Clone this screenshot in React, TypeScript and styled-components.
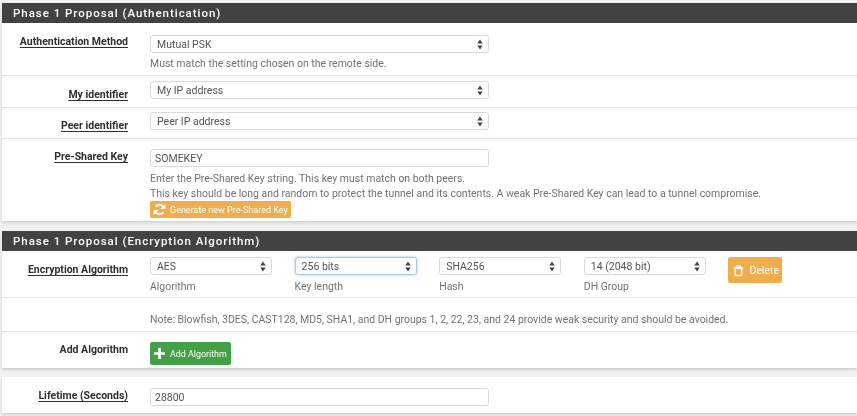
import React from "react";
import styled, { createGlobalStyle } from "styled-components";

const GlobalStyle = createGlobalStyle`
  html, body {
    margin: 0;
    padding: 0;
    background: #f2f2f2;
    overflow: hidden;
  }
  body {
    font-family: Roboto, "Liberation Sans", sans-serif;
    font-size: 10.5px;
    color: #555;
  }
`;

const Page = styled.div`
  width: 857px;
  height: 416px;
  padding: 3px 0 0 2px;
  box-sizing: border-box;
  filter: blur(0.35px);
`;

const Panel = styled.section<{ $gap: number }>`
  background: #fff;
  margin-bottom: ${(p) => p.$gap}px;
  box-shadow: 0 2px 3px rgba(0, 0, 0, 0.14);
`;

const PanelTitle = styled.h2`
  margin: 0;
  height: 20px;
  padding-left: 11px;
  background: #424242;
  color: #fff;
  font-size: 11.5px;
  font-weight: 500;
  letter-spacing: 0.97px;
  line-height: 20px;
`;

const Row = styled.div<{ $height: number; $last?: boolean }>`
  display: grid;
  grid-template-columns: 126px 1fr;
  column-gap: 22px;
  height: ${(p) => p.$height}px;
  box-sizing: border-box;
  border-bottom: ${(p) => (p.$last ? "none" : "1px solid #e6e6e6")};
`;

const Label = styled.div<{ $top: number; $plain?: boolean }>`
  justify-self: end;
  align-self: start;
  margin-top: ${(p) => p.$top}px;
  height: max-content;
  color: #2f2f2f;
  font-size: 10.5px;
  font-weight: 700;
  line-height: 12px;
  text-decoration: ${(p) => (p.$plain ? "none" : "underline")};
  text-underline-offset: 2px;
`;

const Field = styled.div<{ $top: number }>`
  padding-top: ${(p) => p.$top}px;
  min-width: 0;
`;

const Box = styled.div<{ $width: number; $focus?: boolean; $input?: boolean }>`
  display: flex;
  align-items: center;
  justify-content: space-between;
  box-sizing: border-box;
  width: ${(p) => p.$width}px;
  height: 18px;
  padding: 0 5px 0 ${(p) => (p.$input ? 4 : 6)}px;
  background: #fff;
  border: 1px solid ${(p) => (p.$focus ? "#a9c9ec" : "#d9d9d9")};
  border-radius: 3px;
  box-shadow: ${(p) => (p.$focus ? "0 0 3px rgba(102, 175, 233, 0.7)" : "none")};
  color: #555;
  font-size: 10.5px;
  white-space: nowrap;
`;

const Help = styled.p<{ $top?: number }>`
  margin: ${(p) => p.$top ?? 0}px 0 0;
  color: #737373;
  font-size: 10.48px;
  line-height: 15px;
  white-space: nowrap;
`;

const Button = styled.div<{ $color: string; $width: number; $height: number; $size?: number; $gap?: number }>`
  display: inline-flex;
  align-items: center;
  gap: ${(p) => p.$gap ?? 4}px;
  box-sizing: border-box;
  width: ${(p) => p.$width}px;
  height: ${(p) => p.$height}px;
  padding-left: ${(p) => p.$gap ?? 3}px;
  background: ${(p) => p.$color};
  border-radius: 2px;
  color: #fff;
  font-size: ${(p) => p.$size ?? 9}px;
  white-space: nowrap;
`;

const AlgoGrid = styled.div`
  display: flex;
  gap: 22.6px;
  align-items: flex-start;
`;

const AlgoColumn = styled.div`
  width: 122px;
`;

const Updown = () => (
  <svg width="6" height="11" viewBox="0 0 6 11">
    <path d="M3 0.5 5.7 4.5H0.3zM3 10.5 0.3 6.5h5.4z" fill="#444" />
  </svg>
);

const Select = ({ children, width, focus }: { children: string; width: number; focus?: boolean }) => (
  <Box $width={width} $focus={focus}>
    <span>{children}</span>
    <Updown />
  </Box>
);

const algos = [
  { value: "AES", help: "Algorithm" },
  { value: "256 bits", help: "Key length", focus: true },
  { value: "SHA256", help: "Hash" },
  { value: "14 (2048 bit)", help: "DH Group" },
];

export default function App() {
  return (
    <>
      <GlobalStyle />
      <Page>
        <Panel $gap={10}>
          <PanelTitle>Phase 1 Proposal (Authentication)</PanelTitle>
          <Row $height={53}>
            <Label $top={13}>Authentication Method</Label>
            <Field $top={12}>
              <Select width={339}>Mutual PSK</Select>
              <Help $top={3}>Must match the setting chosen on the remote side.</Help>
            </Field>
          </Row>
          <Row $height={32}>
            <Label $top={13}>My identifier</Label>
            <Field $top={5}>
              <Select width={339}>My IP address</Select>
            </Field>
          </Row>
          <Row $height={31}>
            <Label $top={12}>Peer identifier</Label>
            <Field $top={4}>
              <Select width={339}>Peer IP address</Select>
            </Field>
          </Row>
          <Row $height={82} $last>
            <Label $top={12}>Pre-Shared Key</Label>
            <Field $top={10}>
              <Box $width={339} $input>
                SOMEKEY
              </Box>
              <Help $top={4}>Enter the Pre-Shared Key string. This key must match on both peers.</Help>
              <Help>
                This key should be long and random to protect the tunnel and its contents. A weak
                Pre-Shared Key can lead to a tunnel compromise.
              </Help>
              <Button $color="#f0ad4e" $width={141} $height={17}>
                <svg width="13" height="13" viewBox="0 0 24 24" fill="none" stroke="#fff" strokeWidth="3.6">
                  <path d="M20 9A8.5 8.5 0 0 0 5 7" />
                  <path d="M4 15a8.5 8.5 0 0 0 15 2" />
                  <path d="M23 2v9h-9zM1 22v-9h9z" fill="#fff" stroke="none" />
                </svg>
                Generate new Pre-Shared Key
              </Button>
            </Field>
          </Row>
        </Panel>
        <Panel $gap={9}>
          <PanelTitle>Phase 1 Proposal (Encryption Algorithm)</PanelTitle>
          <Row $height={47}>
            <Label $top={13}>Encryption Algorithm</Label>
            <Field $top={6}>
              <AlgoGrid>
                {algos.map((a) => (
                  <AlgoColumn key={a.help}>
                    <Select width={122} focus={a.focus}>
                      {a.value}
                    </Select>
                    <Help $top={4}>{a.help}</Help>
                  </AlgoColumn>
                ))}
                <Button $color="#f0ad4e" $width={54} $height={26} $size={10.5} $gap={5}>
                  <svg width="11" height="13" viewBox="0 0 24 26" fill="none" stroke="#fff" strokeWidth="3">
                    <path d="M5 8h14v16H5zM2 7h20M8 6V3h8v3" />
                  </svg>
                  Delete
                </Button>
              </AlgoGrid>
            </Field>
          </Row>
          <Row $height={34}>
            <div />
            <Field $top={14}>
              <Help>
                Note: Blowfish, 3DES, CAST128, MD5, SHA1, and DH groups 1, 2, 22, 23, and 24 provide weak
                security and should be avoided.
              </Help>
            </Field>
          </Row>
          <Row $height={36} $last>
            <Label $top={12} $plain>
              Add Algorithm
            </Label>
            <Field $top={10}>
              <Button $color="#43a047" $width={81} $height={23} $size={8.9}>
                <svg width="13" height="13" viewBox="0 0 24 24" fill="none" stroke="#fff" strokeWidth="5">
                  <path d="M12 2v20M2 12h20" />
                </svg>
                Add Algorithm
              </Button>
            </Field>
          </Row>
        </Panel>
        <Panel $gap={0}>
          <Row $height={36} $last>
            <Label $top={13}>Lifetime (Seconds)</Label>
            <Field $top={11}>
              <Box $width={339} $input>
                28800
              </Box>
            </Field>
          </Row>
        </Panel>
      </Page>
    </>
  );
}
